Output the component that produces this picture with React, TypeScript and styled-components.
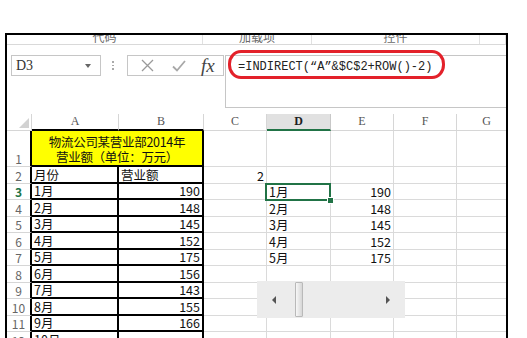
import styled, { createGlobalStyle } from 'styled-components';

const GlobalStyle = createGlobalStyle`
  html, body {
    margin: 0;
    padding: 0;
    background: #fff;
  }
  body {
    width: 527px;
    height: 338px;
    overflow: hidden;
    font-family: "Noto Sans CJK SC", sans-serif;
  }
`;

const Page = styled.div`
  padding: 33px 0 0 5px;
`;

const Frame = styled.div`
  width: 499px;
  height: 320px;
  border: 2px solid #000;
  border-bottom: none;
  overflow: hidden;
  background: #fff;
`;

const GroupBar = styled.div`
  display: flex;
  height: 9px;
  border-bottom: 1px solid #d9d9d9;
  overflow: hidden;
`;

const Group = styled.div<{ $w?: number }>`
  flex: ${p => (p.$w ? `0 0 ${p.$w}px` : '1')};
  box-sizing: border-box;
  border-right: 1px solid #e1e1e1;
  text-align: center;
  font-size: 12px;
  line-height: 3px;
  color: #6a6a6a;
`;

const FormulaArea = styled.div`
  display: flex;
  align-items: flex-start;
  height: 53px;
  padding: 10px 0 6px 4px;
`;

const NameBox = styled.div`
  box-sizing: border-box;
  width: 90px;
  height: 21px;
  border: 1px solid #c6c6c6;
  display: flex;
  align-items: center;
  justify-content: space-between;
  padding: 0 9px 0 4px;
  font-family: "Liberation Serif", serif;
  font-size: 14px;
  color: #333;
`;

const DropArrow = styled.span`
  width: 0;
  height: 0;
  border-left: 3px solid transparent;
  border-right: 3px solid transparent;
  border-top: 4px solid #666;
`;

const Dots = styled.div`
  width: 4px;
  margin: 0 12px 0 10px;
  height: 21px;
  display: flex;
  flex-direction: column;
  align-items: center;
  justify-content: center;
  gap: 2px;
  span {
    width: 1.5px;
    height: 1.5px;
    background: #aaa;
  }
`;

const ButtonsBox = styled.div`
  box-sizing: border-box;
  width: 97px;
  height: 21px;
  border: 1px solid #c6c6c6;
  display: flex;
  align-items: center;
  padding-left: 13px;
  gap: 18px;
`;

const Fx = styled.span`
  font-family: "Liberation Serif", serif;
  font-style: italic;
  font-size: 19px;
  line-height: 19px;
  color: #444;
  margin-left: -3px;
`;

const FormulaInput = styled.div`
  position: relative;
  flex: 1;
  box-sizing: border-box;
  height: 53px;
  margin-left: 1px;
  border: 1px solid #c6c6c6;
  border-right: none;
  padding: 4px 0 0 12px;
  font-family: "Liberation Mono", "Noto Sans CJK SC", monospace;
  font-size: 12px;
  line-height: 14px;
  color: #222;
  white-space: nowrap;
`;

const Highlight = styled.div`
  position: absolute;
  left: 2px;
  top: -6px;
  width: 217px;
  height: 29px;
  box-sizing: border-box;
  border: 3.5px solid #e3212a;
  border-radius: 13px / 14px;
`;

const Sheet = styled.div`
  position: relative;
`;

const Row = styled.div<{ $h: number }>`
  display: flex;
  height: ${p => p.$h}px;
`;

const Corner = styled.div`
  flex: 0 0 25px;
  box-sizing: border-box;
  border-right: 1px solid #d6d6d6;
  border-bottom: 1px solid #d6d6d6;
  display: flex;
  align-items: flex-end;
  justify-content: flex-end;
  padding: 0 2px 2px 0;
`;

const ColHead = styled.div<{ $w: number; $box?: boolean; $sel?: boolean }>`
  flex: 0 0 ${p => p.$w}px;
  box-sizing: border-box;
  text-align: center;
  font-family: "Liberation Serif", serif;
  font-size: 12px;
  line-height: 15px;
  color: ${p => (p.$sel ? '#1d1d1d' : '#555')};
  font-weight: ${p => (p.$sel ? 'bold' : 'normal')};
  background: ${p => (p.$sel ? '#e1e1e1' : '#fff')};
  border-right: 1px solid ${p => (p.$sel ? '#c8c8c8' : '#d6d6d6')};
  border-bottom: ${p =>
    p.$sel ? '2px solid #217346' : p.$box ? '2px solid #000' : '1px solid #d6d6d6'};
`;

const RowHead = styled.div<{ $box?: boolean; $sel?: boolean }>`
  flex: 0 0 25px;
  box-sizing: border-box;
  display: flex;
  align-items: flex-end;
  justify-content: center;
  font-size: 12px;
  line-height: 15px;
  color: ${p => (p.$sel ? '#217346' : '#666')};
  font-weight: ${p => (p.$sel ? 'bold' : 'normal')};
  border-right: ${p => (p.$box ? '2px solid #000' : '1px solid #d6d6d6')};
  border-bottom: 1px solid #d6d6d6;
`;

const Cell = styled.div<{ $w: number; $box?: boolean; $right?: boolean }>`
  position: relative;
  flex: 0 0 ${p => p.$w}px;
  box-sizing: border-box;
  display: flex;
  align-items: flex-end;
  justify-content: ${p => (p.$right ? 'flex-end' : 'flex-start')};
  padding: 0 2px;
  border-right: ${p => (p.$box ? '2px solid #000' : '1px solid #dadada')};
  border-bottom: ${p => (p.$box ? '2px solid #000' : '1px solid #dadada')};
  font-size: 12.5px;
  line-height: 15px;
  color: #111;
  white-space: nowrap;
`;

const TitleCell = styled.div`
  flex: 0 0 172px;
  box-sizing: border-box;
  display: flex;
  flex-direction: column;
  align-items: center;
  justify-content: center;
  padding-top: 1px;
  background: #ffff00;
  border-right: 2px solid #000;
  border-bottom: 2px solid #000;
  font-size: 12.5px;
  line-height: 15px;
  color: #111;
  letter-spacing: -0.3px;
`;

const Selection = styled.div`
  position: absolute;
  z-index: 2;
  left: -2px;
  top: -1px;
  right: -1px;
  bottom: -2px;
  border: 2px solid #217346;
  &::after {
    content: '';
    position: absolute;
    right: -5px;
    bottom: -5px;
    width: 7px;
    height: 7px;
    background: #217346;
    border: 1px solid #fff;
    box-sizing: border-box;
  }
`;

const ScrollControl = styled.div`
  position: absolute;
  z-index: 3;
  left: 250px;
  top: 167px;
  width: 148px;
  height: 37px;
  background: #ececec;
  display: flex;
  align-items: center;
  padding: 0 15px 0 15px;
  box-sizing: border-box;
`;

const Arrow = styled.span<{ $dir: 'left' | 'right' }>`
  width: 0;
  height: 0;
  border-top: 4px solid transparent;
  border-bottom: 4px solid transparent;
  ${p =>
    p.$dir === 'left'
      ? 'border-right: 4px solid #555;'
      : 'border-left: 4px solid #555; margin-left: auto;'}
`;

const Thumb = styled.div`
  width: 8px;
  height: 35px;
  margin-left: 19px;
  box-sizing: border-box;
  border: 1px solid #b9b9b9;
  border-radius: 1px;
  background: linear-gradient(to right, #f7f7f7, #d6d6d6);
`;

const COLS = [87, 85, 63, 64, 63, 63, 60];
const LETTERS = ['A', 'B', 'C', 'D', 'E', 'F', 'G'];

type RowData = { n: number; a?: string; b?: string; c?: string; d?: string; e?: string };

const ROWS: RowData[] = [
  { n: 2, a: '月份', b: '营业额', c: '2' },
  { n: 3, a: '1月', b: '190', d: '1月', e: '190' },
  { n: 4, a: '2月', b: '148', d: '2月', e: '148' },
  { n: 5, a: '3月', b: '145', d: '3月', e: '145' },
  { n: 6, a: '4月', b: '152', d: '4月', e: '152' },
  { n: 7, a: '5月', b: '175', d: '5月', e: '175' },
  { n: 8, a: '6月', b: '156' },
  { n: 9, a: '7月', b: '143' },
  { n: 10, a: '8月', b: '155' },
  { n: 11, a: '9月', b: '166' },
  { n: 12, a: '10月', b: '' },
];

const XIcon = () => (
  <svg width="13" height="13" viewBox="0 0 13 13">
    <path d="M1 1 L12 12 M12 1 L1 12" stroke="#9a9a9a" strokeWidth="1.3" fill="none" />
  </svg>
);

const CheckIcon = () => (
  <svg width="14" height="12" viewBox="0 0 14 12">
    <path d="M1 6.5 L5 10.5 L13 1" stroke="#a8a8a8" strokeWidth="1.8" fill="none" />
  </svg>
);

const CornerMark = () => (
  <svg width="10" height="10" viewBox="0 0 10 10">
    <polygon points="10,0 10,10 0,10" fill="#d2d2d2" />
  </svg>
);

export default function App() {
  return (
    <>
      <GlobalStyle />
      <Page>
        <Frame>
          <GroupBar>
            <Group $w={196}>代码</Group>
            <Group $w={109}>加载项</Group>
            <Group $w={168}>控件</Group>
            <Group />
          </GroupBar>

          <FormulaArea>
            <NameBox>
              D3
              <DropArrow />
            </NameBox>
            <Dots>
              <span />
              <span />
              <span />
            </Dots>
            <ButtonsBox>
              <XIcon />
              <CheckIcon />
              <Fx>fx</Fx>
            </ButtonsBox>
            <FormulaInput>
              =INDIRECT(“A”&amp;$C$2+ROW()-2)
              <Highlight />
            </FormulaInput>
          </FormulaArea>

          <Sheet>
            <Row $h={17}>
              <Corner>
                <CornerMark />
              </Corner>
              {LETTERS.map((l, i) => (
                <ColHead key={l} $w={COLS[i]} $box={i < 2} $sel={l === 'D'}>
                  {l}
                </ColHead>
              ))}
            </Row>

            <Row $h={36}>
              <RowHead $box>1</RowHead>
              <TitleCell>
                <span>物流公司某营业部2014年</span>
                <span>营业额（单位：万元）</span>
              </TitleCell>
              {COLS.slice(2).map((w, i) => (
                <Cell key={i} $w={w} />
              ))}
            </Row>

            {ROWS.map(r => (
              <Row key={r.n} $h={16.5}>
                <RowHead $box $sel={r.n === 3}>
                  {r.n}
                </RowHead>
                <Cell $w={COLS[0]} $box>
                  {r.a}
                </Cell>
                <Cell $w={COLS[1]} $box $right={r.n > 2}>
                  {r.b}
                </Cell>
                <Cell $w={COLS[2]} $right>
                  {r.c}
                </Cell>
                <Cell $w={COLS[3]}>
                  {r.d}
                  {r.n === 3 && <Selection />}
                </Cell>
                <Cell $w={COLS[4]} $right>
                  {r.e}
                </Cell>
                <Cell $w={COLS[5]} />
                <Cell $w={COLS[6]} />
              </Row>
            ))}

            <ScrollControl>
              <Arrow $dir="left" />
              <Thumb />
              <Arrow $dir="right" />
            </ScrollControl>
          </Sheet>
        </Frame>
      </Page>
    </>
  );
}
